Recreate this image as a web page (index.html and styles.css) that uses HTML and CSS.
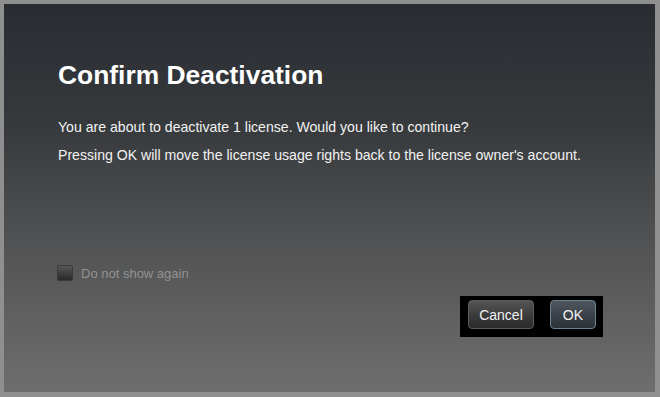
FILE: index.html
```html
<!DOCTYPE html>
<html lang="en">
<head>
  <meta charset="UTF-8" />
  <title>Confirm Deactivation</title>
  <link rel="stylesheet" href="styles.css">
</head>
<body>
  <div class="frame">
    <div class="dialog">
      <h1 class="title">Confirm Deactivation</h1>
      <p class="msg">You are about to deactivate 1 license. Would you like to continue?</p>
      <p class="msg">Pressing OK will move the license usage rights back to the license owner's account.</p>
      <div class="spacer"></div>
      <label class="check">
        <span class="box"></span>
        <span>Do not show again</span>
      </label>
      <div class="actions">
        <div class="btn-group">
          <button class="btn">Cancel</button>
          <button class="btn btn-ok">OK</button>
        </div>
      </div>
    </div>
  </div>
</body>
</html>
```

FILE: styles.css
```css
html, body {
  margin: 0;
  padding: 0;
}
body {
  font-family: 'Liberation Sans', Arial, sans-serif;
  background: #8e8e8e;
}
.frame {
  width: 660px;
  height: 397px;
  box-sizing: border-box;
  padding: 4px 5px 5px 4px;
  background: #8f8f8f;
}
.dialog {
  height: 100%;
  box-sizing: border-box;
  display: flex;
  flex-direction: column;
  padding: 56px 0 0 54px;
  background: linear-gradient(to bottom, #292c31 0%, #36393c 30%, #505152 60%, #6e6e6e 100%);
  color: #f2f2f2;
}
.title {
  margin: 0 0 29px 0;
  font-size: 26.4px;
  font-weight: bold;
  color: #fff;
  line-height: 30px;
}
.msg {
  margin: 0 0 12px 0;
  font-size: 14.1px;
  line-height: 16px;
}
.spacer {
  height: 90px;
}
.check {
  display: flex;
  align-items: center;
  gap: 8px;
  margin-left: -1px;
  color: #939393;
  font-size: 13px;
}
.box {
  width: 16px;
  height: 16px;
  border-radius: 3px;
  background: linear-gradient(to bottom, #5a5a5a, #252525);
  box-shadow: inset 0 0 0 1px #3a3a3a;
}
.actions {
  display: flex;
  justify-content: flex-end;
  padding-right: 52px;
  margin-top: 15px;
}
.btn-group {
  display: flex;
  gap: 16px;
  padding: 4px 7px 8px 8px;
  background: #000;
}
.btn {
  height: 29px;
  padding: 0 10px;
  font-family: 'Liberation Sans', Arial, sans-serif;
  font-size: 14px;
  color: #f2f2f2;
  border: 1px solid #5c5c5c;
  border-radius: 4px;
  background: linear-gradient(to bottom, #555 0%, #3a3a3a 55%, #2b2b2b 100%);
}
.btn-ok {
  padding: 0 12px;
  border-color: #6a8090;
  background: linear-gradient(to bottom, #4f565d 0%, #394047 55%, #2c3238 100%);
}
```
